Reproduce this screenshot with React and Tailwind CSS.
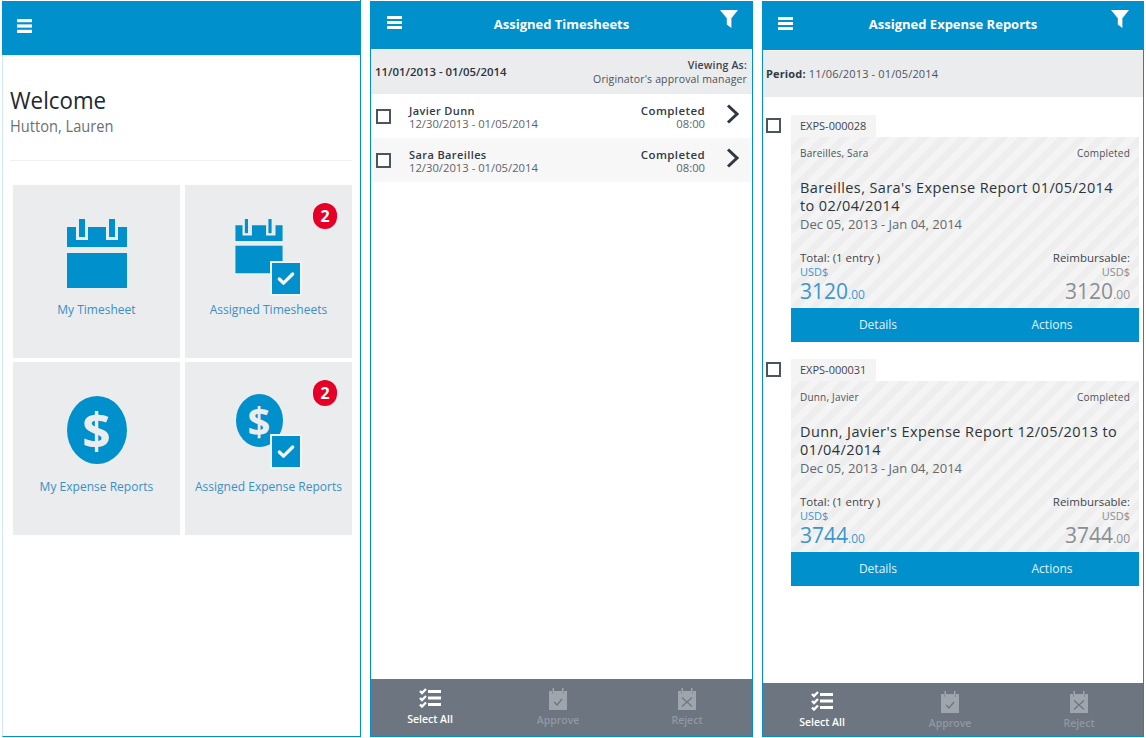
import { Check } from 'lucide-react'

const stripes = 'bg-[repeating-linear-gradient(135deg,#f4f4f4,#f4f4f4_7px,#eeeeee_7px,#eeeeee_14px)]'

function Burger({ className }) {
  return (
    <svg viewBox="0 0 16 14" className={className} fill="#fff" preserveAspectRatio="none">
      <rect x="0" y="0" width="16" height="3.2" />
      <rect x="0" y="5.4" width="16" height="3.2" />
      <rect x="0" y="10.8" width="16" height="3.2" />
    </svg>
  )
}

function Funnel() {
  return (
    <svg viewBox="0 0 18 18" className="w-[18px] h-[18px]" fill="#fff">
      <path d="M0 0h18l-6.6 8.2V18l-4.600-3.600V8.200z" />
    </svg>
  )
}

function Calendar({ small }) {
  return (
    <svg viewBox="0 0 60 70" className={small ? 'w-[48px] h-[55px]' : 'w-[60px] h-[70px]'}>
      <path d="M0 8h60v20H0z" fill="#0090cb" />
      <rect x="9" y="0" width="12" height="21" fill="#ebecee" />
      <rect x="39" y="0" width="12" height="21" fill="#ebecee" />
      <rect x="12" y="0" width={small ? 4 : 6} height="18" fill="#0090cb" />
      <rect x="42" y="0" width={small ? 4 : 6} height="18" fill="#0090cb" />
      <rect x="0" y="34" width="60" height="35" fill="#0090cb" />
    </svg>
  )
}

function Coin({ small }) {
  return (
    <div className={`flex items-center justify-center rounded-[50%] bg-[#0090cb] font-bold text-[#ebecee] ${small ? 'w-[47px] h-[53px] text-[40px]' : 'w-[60px] h-[68px] text-[50px]'}`}>
      $
    </div>
  )
}

function CheckBadge() {
  return (
    <div className="absolute right-[-17px] bottom-[-20px] flex items-center justify-center w-[28px] h-[31px] bg-[#0090cb] outline outline-2 outline-[#f1f2f3]">
      <Check size={20} strokeWidth={4} color="#f4f6f7" />
    </div>
  )
}

function Tile({ label, badge, children }) {
  return (
    <div className="relative flex flex-col items-center h-[173px] bg-[#ebecee] pt-[34px]">
      {badge && (
        <div className="absolute top-[18px] right-[15px] flex items-center justify-center w-[24px] h-[26px] rounded-full bg-[#e60028] text-white text-[16px] font-bold">
          {badge}
        </div>
      )}
      <div className="flex items-start justify-center h-[70px]">{children}</div>
      <div className="mt-[11px] text-[13px] leading-[18px] text-[#3b8fc6] scale-x-[.925]">{label}</div>
    </div>
  )
}

function Home() {
  return (
    <div className="flex flex-col w-[359px] h-[737px] ml-[2px] border-r border-b border-l border-[#0090cb] border-l-[#cfe9f5]">
      <div className="flex items-center h-[54px] mt-[1px] -mx-[1px] pl-[15px] pb-[5px] bg-[#0090cb]">
        <Burger className="w-[15px] h-[14px]" />
      </div>
      <div className="pl-[7px] pr-[8px] pt-[30px]">
        <div className="text-[24px] leading-[30px] text-[#22282e] origin-left scale-x-[.93]">Welcome</div>
        <div className="text-[17px] leading-[22px] text-[#6b7075] origin-left scale-x-[.86]">Hutton, Lauren</div>
        <div className="mt-[23px] border-t border-[#eeeff0]" />
        <div className="grid grid-cols-2 gap-x-[5px] gap-y-[4px] mt-[24px] ml-[3px]">
          <Tile label="My Timesheet"><Calendar /></Tile>
          <Tile label="Assigned Timesheets" badge="2">
            <div className="relative mr-[19px]"><Calendar small /><CheckBadge /></div>
          </Tile>
          <Tile label="My Expense Reports"><Coin /></Tile>
          <Tile label="Assigned Expense Reports" badge="2">
            <div className="relative mr-[19px] -mt-[2px]"><Coin small /><CheckBadge /></div>
          </Tile>
        </div>
      </div>
    </div>
  )
}

function ListIcon() {
  return (
    <svg viewBox="0 0 22 20" className="w-[22px] h-[20px]" fill="none">
      <path d="M1 3l2 2 4-4M1 10l2 2 4-4M1 16.500l2 2 4-4" stroke="#fff" strokeWidth="2.400" />
      <rect x="9" y="2" width="13" height="3" fill="#fff" />
      <rect x="9" y="8.500" width="13" height="3" fill="#fff" />
      <rect x="9" y="15" width="13" height="3" fill="#fff" />
    </svg>
  )
}

function ClipIcon({ reject }) {
  return (
    <svg viewBox="0 0 18 22" className="w-[18px] h-[22px]" fill="none">
      <path d="M0 3h3v3h2V3h8v3h2V3h3v19H0z" fill="#9fa5ad" />
      <rect x="3.500" y="0" width="1.500" height="6" fill="#9fa5ad" />
      <rect x="13" y="0" width="1.500" height="6" fill="#9fa5ad" />
      {reject
        ? <path d="M4 9.500l10 9M14 9.500l-10 9" stroke="#6c7580" strokeWidth="1.100" />
        : <path d="M5 14l3 3 5-6" stroke="#6c7580" strokeWidth="1.300" />}
    </svg>
  )
}

function Footer({ height, pad }) {
  return (
    <div className={`flex mt-auto bg-[#6c7580] ${pad} ${height}`}>
      <div className="flex flex-col items-center w-[118px]">
        <ListIcon />
        <div className="mt-[4px] text-[10.500px] leading-[14px] font-semibold text-white">Select All</div>
      </div>
      <div className="flex flex-col items-center w-[128px] ml-[5px]">
        <ClipIcon />
        <div className="mt-[3px] text-[10.500px] leading-[14px] font-semibold text-[#9099a2]">Approve</div>
      </div>
      <div className="flex flex-col items-center w-[128px] ml-[1px]">
        <ClipIcon reject />
        <div className="mt-[3px] text-[10.500px] leading-[14px] font-semibold text-[#9099a2]">Reject</div>
      </div>
    </div>
  )
}

function Header({ title, height, burger, titlePad }) {
  return (
    <div className={`relative flex items-center justify-center bg-[#0090cb] ${height}`}>
      <div className={`absolute ${burger}`}><Burger className="w-[15px] h-[13px]" /></div>
      <div className={`text-[13px] font-bold text-white ${titlePad}`}>{title}</div>
      <div className="absolute right-[14px] top-[9px]"><Funnel /></div>
    </div>
  )
}

function Checkbox() {
  return <div className="w-[15px] h-[15px] shrink-0 border-2 border-[#4a5560] bg-white" />
}

function Row({ name, alt }) {
  return (
    <div className={`flex items-center h-[44px] pl-[5px] pr-[12px] ${alt ? 'bg-[#f7f7f7]' : 'bg-white'}`}>
      <Checkbox />
      <div className="ml-[18px] mt-[2px] flex-1">
        <div className="text-[11px] leading-[13px] font-semibold tracking-[0.4px] text-[#333a42]">{name}</div>
        <div className="text-[11.250px] leading-[13px] text-[#5c646c]">12/30/2013 - 01/05/2014</div>
      </div>
      <div className="mt-[2px] text-right">
        <div className="text-[11.500px] leading-[13px] font-semibold tracking-[0.4px] text-[#333a42]">Completed</div>
        <div className="text-[11.250px] leading-[13px] text-[#5c646c]">08:00</div>
      </div>
      <svg viewBox="0 0 14 20" className="ml-[21px] w-[14px] h-[20px] mb-[4px]" fill="none">
        <path d="M2 1.500l9 8.500-9 8.500" stroke="#2f3740" strokeWidth="3" />
      </svg>
    </div>
  )
}

function Timesheets() {
  return (
    <div className="flex flex-col w-[383px] h-[736px] mt-[1px] ml-[9px] border-x border-b border-[#0090cb]">
      <Header title="Assigned Timesheets" height="h-[48px]" burger="left-[16px] top-[15px]" />
      <div className="flex items-center justify-between h-[44px] mt-[1px] pl-[4px] pr-[5px] bg-[#ebecee]">
        <div className="text-[11.400px] font-semibold text-[#2c333a]">11/01/2013 - 01/05/2014</div>
        <div className="text-right">
          <div className="text-[10.500px] leading-[14px] font-semibold text-[#3b434b] tracking-[0.2px]">Viewing As:</div>
          <div className="text-[10.500px] leading-[14px] text-[#4b535b] tracking-[0.15px]">Originator's approval manager</div>
        </div>
      </div>
      <Row name="Javier Dunn" />
      <Row name="Sara Bareilles" alt />
      <Footer height="h-[57px]" pad="pt-[9px]" />
    </div>
  )
}

function Report({ code, person, title, amount }) {
  return (
    <div className="flex items-start pl-[3px] pr-[5px]">
      <div className="mt-[3px]"><Checkbox /></div>
      <div className="ml-[10px] flex-1">
        <div className="w-[85px] h-[22px] pl-[9px] bg-[#f4f4f4] text-[11px] leading-[22px] text-[#3f464d]">{code}</div>
        <div className={`h-[171px] px-[9px] pt-[9px] ${stripes}`}>
          <div className="flex justify-between text-[10px] leading-[14px] text-[#4b535b] tracking-[0.2px]">
            <span>{person}</span><span>Completed</span>
          </div>
          <div className="mt-[19px] pr-[10px] text-[14.500px] leading-[18px] text-[#2c333a] tracking-[0.4px]">{title}</div>
          <div className="mt-[0px] text-[13px] leading-[18px] text-[#62696f]">Dec 05, 2013 - Jan 04, 2014</div>
          <div className="flex justify-between mt-[17px]">
            <div>
              <div className="text-[11.500px] leading-[15px] text-[#3f464d]">Total: (1 entry )</div>
              <div className="text-[11px] leading-[13px] text-[#3b96d0]">USD$</div>
              <div className="text-[21px] leading-[26px] text-[#3b96d0]">{amount}<span className="text-[12px]">.00</span></div>
            </div>
            <div className="text-right">
              <div className="text-[11.500px] leading-[15px] text-[#3f464d]">Reimbursable:</div>
              <div className="text-[11px] leading-[13px] text-[#8a8f94]">USD$</div>
              <div className="text-[21px] leading-[26px] text-[#8a8f94]">{amount}<span className="text-[12px]">.00</span></div>
            </div>
          </div>
        </div>
        <div className="flex h-[34px] bg-[#0090cb] text-[12px] leading-[34px] text-[#e3f3fa] text-center">
          <div className="w-[174px]">Details</div>
          <div className="w-[174px]">Actions</div>
        </div>
      </div>
    </div>
  )
}

function Expenses() {
  return (
    <div className="flex flex-col w-[382px] h-[736px] mt-[1px] ml-[9px] border-x border-b border-[#0090cb]">
      <Header title="Assigned Expense Reports" height="h-[49px]" burger="left-[15px] top-[16px]" titlePad="pb-[2px]" />
      <div className="flex items-center h-[46px] mt-[1px] pl-[3px] pt-[1px] bg-[#ebecee] text-[11px] tracking-[0.15px] text-[#4b535b]">
        <span className="font-bold text-[#333a42] mr-[3px]">Period:</span>11/06/2013 - 01/05/2014
      </div>
      <div className="flex flex-col gap-[17px] pt-[18px]">
        <Report code="EXPS-000028" person="Bareilles, Sara" title="Bareilles, Sara's Expense Report 01/05/2014 to 02/04/2014" amount="3120" />
        <Report code="EXPS-000031" person="Dunn, Javier" title="Dunn, Javier's Expense Report 12/05/2013 to 01/04/2014" amount="3744" />
      </div>
      <Footer height="h-[53px]" pad="pt-[8px]" />
    </div>
  )
}

export default function App() {
  return (
    <div className="flex items-start w-[1146px] h-[738px] overflow-hidden bg-white font-['Open_Sans',sans-serif]">
      <Home />
      <Timesheets />
      <Expenses />
    </div>
  )
}
